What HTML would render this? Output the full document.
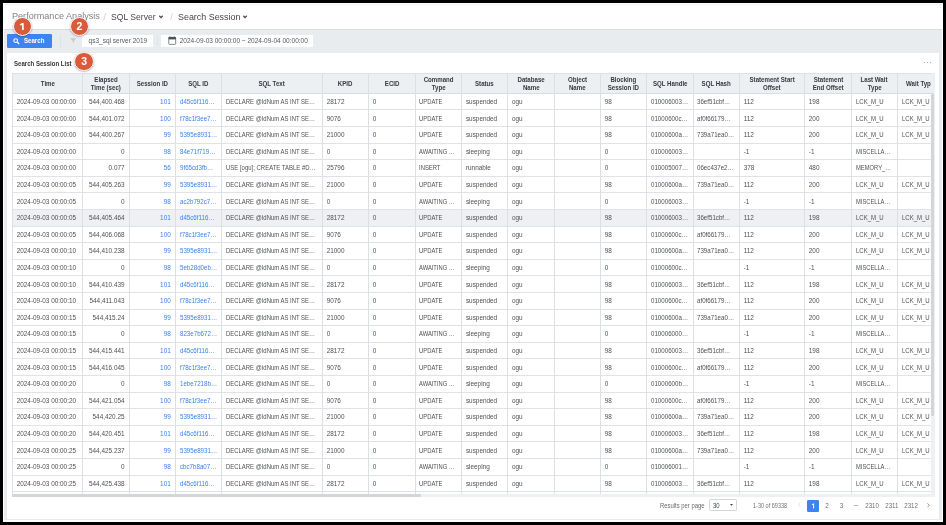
<!DOCTYPE html><html><head><meta charset="utf-8"><style>
*{box-sizing:border-box;margin:0;padding:0}
html,body{width:946px;height:525px;overflow:hidden;background:#000;font-family:"Liberation Sans",sans-serif}
.a{position:absolute}
.t{position:absolute;white-space:nowrap;display:block}
#screen{will-change:transform;position:absolute;left:3px;top:3px;width:940px;height:519px;background:#fff;overflow:hidden}
#clip{position:absolute;left:9.4px;top:70.1px;width:921.6px;height:424px;overflow:hidden}
.badge{position:absolute;width:19.6px;height:19.6px;border-radius:50%;background:#d95b3c;border:1.5px solid #fff;box-shadow:0 0.5px 1.8px rgba(0,0,0,.38);color:#fff;font-weight:bold;font-size:10.5px;line-height:16.6px;text-align:center}
</style></head><body><div id="screen">
<div class="a" style="left:1px;top:26px;width:938px;height:492px;background:#e9ecef"></div>
<div class="a" style="left:1px;top:25.8px;width:938px;height:1.2px;background:#d9dce0"></div>
<div class="a" style="left:1px;top:1px;width:938px;height:1px;background:#f3f3f3"></div>
<span class="t" style="left:9.20px;top:4.14px;font-size:9.4px;line-height:18.8px;color:#808387;transform:scaleX(0.969);transform-origin:0 50%;">Performance Analysis</span>
<span class="t" style="left:100.60px;top:4.74px;font-size:9.4px;line-height:18.8px;color:#cdd0d4;">/</span>
<span class="t" style="left:108.30px;top:4.11px;font-size:9.5px;line-height:19.0px;color:#45484c;transform:scaleX(0.905);transform-origin:0 50%;">SQL Server</span>
<span class="t" style="left:167.20px;top:4.74px;font-size:9.4px;line-height:18.8px;color:#cdd0d4;">/</span>
<span class="t" style="left:175.00px;top:4.11px;font-size:9.5px;line-height:19.0px;color:#45484c;transform:scaleX(0.938);transform-origin:0 50%;">Search Session</span>
<svg class="a" style="left:155.1px;top:12.0px" width="6" height="4" viewBox="0 0 6 4"><path d="M1.3 0.8 L3 2.6 L4.7 0.8" fill="none" stroke="#45484c" stroke-width="1.25"/></svg>
<svg class="a" style="left:239.1px;top:12.0px" width="6" height="4" viewBox="0 0 6 4"><path d="M1.3 0.8 L3 2.6 L4.7 0.8" fill="none" stroke="#45484c" stroke-width="1.25"/></svg>
<div class="a" style="left:4px;top:30.799999999999997px;width:44.9px;height:13.9px;background:#3d84f2;border-radius:1.2px"></div>
<svg class="a" style="left:9.5px;top:34.5px" width="8" height="7" viewBox="0 0 8 7"><circle cx="2.7" cy="2.6" r="1.85" fill="none" stroke="#fff" stroke-width="1.15"/><path d="M4.1 4.0 L6.2 6.1" stroke="#fff" stroke-width="1.3"/></svg>
<span class="t" style="left:20.80px;top:30.81px;font-size:6.9px;line-height:13.8px;color:#fff;font-weight:bold;transform:scaleX(0.886);transform-origin:0 50%;">Search</span>
<div class="a" style="left:57px;top:31px;width:1px;height:12.5px;background:#dfe2e6"></div>
<svg class="a" style="left:67.2px;top:35.1px" width="7" height="5" viewBox="0 0 7 5"><path d="M0.2 0.2 L6.4 0.2 L3.9 3.0 L3.9 4.8 L2.7 4.8 L2.7 3.0 Z" fill="#c6c9cd"/></svg>
<div class="a" style="left:79.3px;top:31.9px;width:71px;height:12px;background:#fff"></div>
<span class="t" style="left:85.60px;top:31.45px;font-size:6.5px;line-height:13.0px;color:#55585c;">qs3_sql server 2019</span>
<div class="a" style="left:153.6px;top:32.5px;width:1px;height:9px;background:#e0e3e7"></div>
<div class="a" style="left:157.6px;top:31.6px;width:152.7px;height:12.4px;background:#fff"></div>
<svg class="a" style="left:165px;top:33px" width="9" height="9" viewBox="0 0 9 9"><rect x="0.75" y="1.25" width="6.9" height="7.1" rx="0.7" fill="none" stroke="#5f6267" stroke-width="0.75"/><rect x="0.6" y="1.1" width="7.2" height="2.3" fill="#4a4d52"/><rect x="1.7" y="0.5" width="0.7" height="1" fill="#4a4d52"/><rect x="5.9" y="0.5" width="0.7" height="1" fill="#4a4d52"/></svg>
<span class="t" style="left:176.70px;top:31.45px;font-size:6.5px;line-height:13.0px;color:#55585c;">2024-09-03 00:00:00 ~ 2024-09-04 00:00:00</span>
<div class="a" style="left:4px;top:49.7px;width:932px;height:465.9px;background:#fff"></div>
<span class="t" style="left:10.70px;top:53.57px;font-size:7.0px;line-height:14.0px;color:#363636;font-weight:bold;transform:scaleX(0.866);transform-origin:0 50%;">Search Session List</span>
<div class="a" style="left:920.6px;top:59.2px;width:1.3px;height:1.3px;background:#8f9296;border-radius:50%"></div>
<div class="a" style="left:923.6px;top:59.2px;width:1.3px;height:1.3px;background:#8f9296;border-radius:50%"></div>
<div class="a" style="left:926.6px;top:59.2px;width:1.3px;height:1.3px;background:#8f9296;border-radius:50%"></div>
<div id="clip" style="left:9.40px;top:70.10px;width:921.60px;height:420.90px">
<div class="a" style="left:0;top:0;width:1000px;height:20.20px;background:#edf0f3"></div>
<div class="a" style="left:0;top:136.40px;width:1000px;height:16.60px;background:#eef0f3"></div>
<div class="a" style="left:0;top:-0.10px;width:1000px;height:1px;background:#dde0e5"></div>
<div class="a" style="left:0;top:19.90px;width:1000px;height:1px;background:#d9dde2"></div>
<div class="a" style="left:0;top:35.90px;width:1000px;height:1px;background:#dfe2e6"></div>
<div class="a" style="left:0;top:52.90px;width:1000px;height:1px;background:#dfe2e6"></div>
<div class="a" style="left:0;top:69.90px;width:1000px;height:1px;background:#dfe2e6"></div>
<div class="a" style="left:0;top:85.90px;width:1000px;height:1px;background:#dfe2e6"></div>
<div class="a" style="left:0;top:102.90px;width:1000px;height:1px;background:#dfe2e6"></div>
<div class="a" style="left:0;top:118.90px;width:1000px;height:1px;background:#dfe2e6"></div>
<div class="a" style="left:0;top:135.90px;width:1000px;height:1px;background:#dfe2e6"></div>
<div class="a" style="left:0;top:152.90px;width:1000px;height:1px;background:#dfe2e6"></div>
<div class="a" style="left:0;top:168.90px;width:1000px;height:1px;background:#dfe2e6"></div>
<div class="a" style="left:0;top:185.90px;width:1000px;height:1px;background:#dfe2e6"></div>
<div class="a" style="left:0;top:201.90px;width:1000px;height:1px;background:#dfe2e6"></div>
<div class="a" style="left:0;top:218.90px;width:1000px;height:1px;background:#dfe2e6"></div>
<div class="a" style="left:0;top:235.90px;width:1000px;height:1px;background:#dfe2e6"></div>
<div class="a" style="left:0;top:251.90px;width:1000px;height:1px;background:#dfe2e6"></div>
<div class="a" style="left:0;top:268.90px;width:1000px;height:1px;background:#dfe2e6"></div>
<div class="a" style="left:0;top:284.90px;width:1000px;height:1px;background:#dfe2e6"></div>
<div class="a" style="left:0;top:301.90px;width:1000px;height:1px;background:#dfe2e6"></div>
<div class="a" style="left:0;top:318.90px;width:1000px;height:1px;background:#dfe2e6"></div>
<div class="a" style="left:0;top:334.90px;width:1000px;height:1px;background:#dfe2e6"></div>
<div class="a" style="left:0;top:351.90px;width:1000px;height:1px;background:#dfe2e6"></div>
<div class="a" style="left:0;top:367.90px;width:1000px;height:1px;background:#dfe2e6"></div>
<div class="a" style="left:0;top:384.90px;width:1000px;height:1px;background:#dfe2e6"></div>
<div class="a" style="left:0;top:401.90px;width:1000px;height:1px;background:#dfe2e6"></div>
<div class="a" style="left:0;top:417.90px;width:1000px;height:1px;background:#dfe2e6"></div>
<div class="a" style="left:0;top:434.90px;width:1000px;height:1px;background:#dfe2e6"></div>
<div class="a" style="left:-0.40px;top:0;width:1px;height:420.90px;background:#dcdfe4"></div>
<div class="a" style="left:69.60px;top:0;width:1px;height:420.90px;background:#dcdfe4"></div>
<div class="a" style="left:116.60px;top:0;width:1px;height:420.90px;background:#dcdfe4"></div>
<div class="a" style="left:162.60px;top:0;width:1px;height:420.90px;background:#dcdfe4"></div>
<div class="a" style="left:208.60px;top:0;width:1px;height:420.90px;background:#dcdfe4"></div>
<div class="a" style="left:309.60px;top:0;width:1px;height:420.90px;background:#dcdfe4"></div>
<div class="a" style="left:355.60px;top:0;width:1px;height:420.90px;background:#dcdfe4"></div>
<div class="a" style="left:402.60px;top:0;width:1px;height:420.90px;background:#dcdfe4"></div>
<div class="a" style="left:448.60px;top:0;width:1px;height:420.90px;background:#dcdfe4"></div>
<div class="a" style="left:494.60px;top:0;width:1px;height:420.90px;background:#dcdfe4"></div>
<div class="a" style="left:541.60px;top:0;width:1px;height:420.90px;background:#dcdfe4"></div>
<div class="a" style="left:587.60px;top:0;width:1px;height:420.90px;background:#dcdfe4"></div>
<div class="a" style="left:633.60px;top:0;width:1px;height:420.90px;background:#dcdfe4"></div>
<div class="a" style="left:680.60px;top:0;width:1px;height:420.90px;background:#dcdfe4"></div>
<div class="a" style="left:726.60px;top:0;width:1px;height:420.90px;background:#dcdfe4"></div>
<div class="a" style="left:791.60px;top:0;width:1px;height:420.90px;background:#dcdfe4"></div>
<div class="a" style="left:838.60px;top:0;width:1px;height:420.90px;background:#dcdfe4"></div>
<div class="a" style="left:884.60px;top:0;width:1px;height:420.90px;background:#dcdfe4"></div>
<span class="t" style="left:27.38px;top:4.14px;font-size:6.8px;line-height:13.6px;color:#36393d;font-weight:bold;transform:scaleX(0.900);transform-origin:50% 50%;">Time</span>
<span class="t" style="left:80.66px;top:0.14px;font-size:6.8px;line-height:13.6px;color:#36393d;font-weight:bold;transform:scaleX(0.900);transform-origin:50% 50%;">Elapsed</span>
<span class="t" style="left:76.94px;top:7.84px;font-size:6.8px;line-height:13.6px;color:#36393d;font-weight:bold;transform:scaleX(0.900);transform-origin:50% 50%;">Time (sec)</span>
<span class="t" style="left:122.62px;top:4.14px;font-size:6.8px;line-height:13.6px;color:#36393d;font-weight:bold;transform:scaleX(0.900);transform-origin:50% 50%;">Session ID</span>
<span class="t" style="left:174.83px;top:4.14px;font-size:6.8px;line-height:13.6px;color:#36393d;font-weight:bold;transform:scaleX(0.900);transform-origin:50% 50%;">SQL ID</span>
<span class="t" style="left:244.94px;top:4.14px;font-size:6.8px;line-height:13.6px;color:#36393d;font-weight:bold;transform:scaleX(0.900);transform-origin:50% 50%;">SQL Text</span>
<span class="t" style="left:324.88px;top:4.14px;font-size:6.8px;line-height:13.6px;color:#36393d;font-weight:bold;transform:scaleX(0.900);transform-origin:50% 50%;">KPID</span>
<span class="t" style="left:371.23px;top:4.14px;font-size:6.8px;line-height:13.6px;color:#36393d;font-weight:bold;transform:scaleX(0.900);transform-origin:50% 50%;">ECID</span>
<span class="t" style="left:409.33px;top:0.14px;font-size:6.8px;line-height:13.6px;color:#36393d;font-weight:bold;transform:scaleX(0.900);transform-origin:50% 50%;">Command</span>
<span class="t" style="left:418.27px;top:7.84px;font-size:6.8px;line-height:13.6px;color:#36393d;font-weight:bold;transform:scaleX(0.900);transform-origin:50% 50%;">Type</span>
<span class="t" style="left:461.81px;top:4.14px;font-size:6.8px;line-height:13.6px;color:#36393d;font-weight:bold;transform:scaleX(0.900);transform-origin:50% 50%;">Status</span>
<span class="t" style="left:503.33px;top:0.14px;font-size:6.8px;line-height:13.6px;color:#36393d;font-weight:bold;transform:scaleX(0.900);transform-origin:50% 50%;">Database</span>
<span class="t" style="left:509.19px;top:7.84px;font-size:6.8px;line-height:13.6px;color:#36393d;font-weight:bold;transform:scaleX(0.900);transform-origin:50% 50%;">Name</span>
<span class="t" style="left:554.27px;top:0.14px;font-size:6.8px;line-height:13.6px;color:#36393d;font-weight:bold;transform:scaleX(0.900);transform-origin:50% 50%;">Object</span>
<span class="t" style="left:555.59px;top:7.84px;font-size:6.8px;line-height:13.6px;color:#36393d;font-weight:bold;transform:scaleX(0.900);transform-origin:50% 50%;">Name</span>
<span class="t" style="left:596.64px;top:0.14px;font-size:6.8px;line-height:13.6px;color:#36393d;font-weight:bold;transform:scaleX(0.900);transform-origin:50% 50%;">Blocking</span>
<span class="t" style="left:593.62px;top:7.84px;font-size:6.8px;line-height:13.6px;color:#36393d;font-weight:bold;transform:scaleX(0.900);transform-origin:50% 50%;">Session ID</span>
<span class="t" style="left:638.19px;top:4.14px;font-size:6.8px;line-height:13.6px;color:#36393d;font-weight:bold;transform:scaleX(0.900);transform-origin:50% 50%;">SQL Handle</span>
<span class="t" style="left:687.71px;top:4.14px;font-size:6.8px;line-height:13.6px;color:#36393d;font-weight:bold;transform:scaleX(0.900);transform-origin:50% 50%;">SQL Hash</span>
<span class="t" style="left:734.42px;top:0.14px;font-size:6.8px;line-height:13.6px;color:#36393d;font-weight:bold;transform:scaleX(0.900);transform-origin:50% 50%;">Statement Start</span>
<span class="t" style="left:749.73px;top:7.84px;font-size:6.8px;line-height:13.6px;color:#36393d;font-weight:bold;transform:scaleX(0.900);transform-origin:50% 50%;">Offset</span>
<span class="t" style="left:799.16px;top:0.14px;font-size:6.8px;line-height:13.6px;color:#36393d;font-weight:bold;transform:scaleX(0.900);transform-origin:50% 50%;">Statement</span>
<span class="t" style="left:798.41px;top:7.84px;font-size:6.8px;line-height:13.6px;color:#36393d;font-weight:bold;transform:scaleX(0.900);transform-origin:50% 50%;">End Offset</span>
<span class="t" style="left:847.01px;top:0.14px;font-size:6.8px;line-height:13.6px;color:#36393d;font-weight:bold;transform:scaleX(0.900);transform-origin:50% 50%;">Last Wait</span>
<span class="t" style="left:854.32px;top:7.84px;font-size:6.8px;line-height:13.6px;color:#36393d;font-weight:bold;transform:scaleX(0.900);transform-origin:50% 50%;">Type</span>
<span class="t" style="left:893.90px;top:4.14px;font-size:6.8px;line-height:13.6px;color:#36393d;font-weight:bold;transform:scaleX(0.900);transform-origin:0 50%;">Wait Type</span>
<span class="t" style="left:4.30px;top:22.88px;font-size:6.4px;line-height:12.8px;color:#4d5054;">2024-09-03 00:00:00</span>
<span class="t" style="left:76.61px;top:22.88px;font-size:6.4px;line-height:12.8px;color:#4d5054;">544,400.468</span>
<span class="t" style="left:147.72px;top:22.88px;font-size:6.4px;line-height:12.8px;color:#3b82ec;">101</span>
<span class="t" style="left:167.40px;top:22.88px;font-size:6.4px;line-height:12.8px;color:#3b82ec;transform:scaleX(0.965);transform-origin:0 50%;">d45c6f116…</span>
<span class="t" style="left:213.40px;top:22.88px;font-size:6.4px;line-height:12.8px;color:#4d5054;transform:scaleX(0.928);transform-origin:0 50%;">DECLARE @IdNum AS INT SE…</span>
<span class="t" style="left:314.30px;top:22.88px;font-size:6.4px;line-height:12.8px;color:#4d5054;">28172</span>
<span class="t" style="left:360.30px;top:22.88px;font-size:6.4px;line-height:12.8px;color:#4d5054;">0</span>
<span class="t" style="left:407.00px;top:22.88px;font-size:6.4px;line-height:12.8px;color:#4d5054;transform:scaleX(0.920);transform-origin:0 50%;">UPDATE</span>
<span class="t" style="left:453.50px;top:22.88px;font-size:6.4px;line-height:12.8px;color:#4d5054;">suspended</span>
<span class="t" style="left:499.50px;top:22.88px;font-size:6.4px;line-height:12.8px;color:#4d5054;">ogu</span>
<span class="t" style="left:592.30px;top:22.88px;font-size:6.4px;line-height:12.8px;color:#4d5054;">98</span>
<span class="t" style="left:638.30px;top:22.88px;font-size:6.4px;line-height:12.8px;color:#4d5054;transform:scaleX(0.967);transform-origin:0 50%;">010006003…</span>
<span class="t" style="left:685.10px;top:22.88px;font-size:6.4px;line-height:12.8px;color:#4d5054;transform:scaleX(0.963);transform-origin:0 50%;">36ef51cbf…</span>
<span class="t" style="left:731.30px;top:22.88px;font-size:6.4px;line-height:12.8px;color:#4d5054;">112</span>
<span class="t" style="left:796.40px;top:22.88px;font-size:6.4px;line-height:12.8px;color:#4d5054;">198</span>
<span class="t" style="left:843.40px;top:22.88px;font-size:6.4px;line-height:12.8px;color:#4d5054;transform:scaleX(0.939);transform-origin:0 50%;">LCK_M_U</span>
<span class="t" style="left:889.20px;top:22.88px;font-size:6.4px;line-height:12.8px;color:#4d5054;transform:scaleX(0.939);transform-origin:0 50%;">LCK_M_U</span>
<span class="t" style="left:4.30px;top:39.48px;font-size:6.4px;line-height:12.8px;color:#4d5054;">2024-09-03 00:00:00</span>
<span class="t" style="left:76.61px;top:39.48px;font-size:6.4px;line-height:12.8px;color:#4d5054;">544,401.072</span>
<span class="t" style="left:147.72px;top:39.48px;font-size:6.4px;line-height:12.8px;color:#3b82ec;">100</span>
<span class="t" style="left:167.40px;top:39.48px;font-size:6.4px;line-height:12.8px;color:#3b82ec;transform:scaleX(0.966);transform-origin:0 50%;">f78c1f3ee7…</span>
<span class="t" style="left:213.40px;top:39.48px;font-size:6.4px;line-height:12.8px;color:#4d5054;transform:scaleX(0.928);transform-origin:0 50%;">DECLARE @IdNum AS INT SE…</span>
<span class="t" style="left:314.30px;top:39.48px;font-size:6.4px;line-height:12.8px;color:#4d5054;">9076</span>
<span class="t" style="left:360.30px;top:39.48px;font-size:6.4px;line-height:12.8px;color:#4d5054;">0</span>
<span class="t" style="left:407.00px;top:39.48px;font-size:6.4px;line-height:12.8px;color:#4d5054;transform:scaleX(0.920);transform-origin:0 50%;">UPDATE</span>
<span class="t" style="left:453.50px;top:39.48px;font-size:6.4px;line-height:12.8px;color:#4d5054;">suspended</span>
<span class="t" style="left:499.50px;top:39.48px;font-size:6.4px;line-height:12.8px;color:#4d5054;">ogu</span>
<span class="t" style="left:592.30px;top:39.48px;font-size:6.4px;line-height:12.8px;color:#4d5054;">98</span>
<span class="t" style="left:638.30px;top:39.48px;font-size:6.4px;line-height:12.8px;color:#4d5054;transform:scaleX(0.966);transform-origin:0 50%;">01000600c…</span>
<span class="t" style="left:685.10px;top:39.48px;font-size:6.4px;line-height:12.8px;color:#4d5054;transform:scaleX(0.963);transform-origin:0 50%;">af0f66179…</span>
<span class="t" style="left:731.30px;top:39.48px;font-size:6.4px;line-height:12.8px;color:#4d5054;">112</span>
<span class="t" style="left:796.40px;top:39.48px;font-size:6.4px;line-height:12.8px;color:#4d5054;">200</span>
<span class="t" style="left:843.40px;top:39.48px;font-size:6.4px;line-height:12.8px;color:#4d5054;transform:scaleX(0.939);transform-origin:0 50%;">LCK_M_U</span>
<span class="t" style="left:889.20px;top:39.48px;font-size:6.4px;line-height:12.8px;color:#4d5054;transform:scaleX(0.939);transform-origin:0 50%;">LCK_M_U</span>
<span class="t" style="left:4.30px;top:56.08px;font-size:6.4px;line-height:12.8px;color:#4d5054;">2024-09-03 00:00:00</span>
<span class="t" style="left:76.61px;top:56.08px;font-size:6.4px;line-height:12.8px;color:#4d5054;">544,400.267</span>
<span class="t" style="left:151.28px;top:56.08px;font-size:6.4px;line-height:12.8px;color:#3b82ec;">99</span>
<span class="t" style="left:167.40px;top:56.08px;font-size:6.4px;line-height:12.8px;color:#3b82ec;transform:scaleX(0.967);transform-origin:0 50%;">5395e8931…</span>
<span class="t" style="left:213.40px;top:56.08px;font-size:6.4px;line-height:12.8px;color:#4d5054;transform:scaleX(0.928);transform-origin:0 50%;">DECLARE @IdNum AS INT SE…</span>
<span class="t" style="left:314.30px;top:56.08px;font-size:6.4px;line-height:12.8px;color:#4d5054;">21000</span>
<span class="t" style="left:360.30px;top:56.08px;font-size:6.4px;line-height:12.8px;color:#4d5054;">0</span>
<span class="t" style="left:407.00px;top:56.08px;font-size:6.4px;line-height:12.8px;color:#4d5054;transform:scaleX(0.920);transform-origin:0 50%;">UPDATE</span>
<span class="t" style="left:453.50px;top:56.08px;font-size:6.4px;line-height:12.8px;color:#4d5054;">suspended</span>
<span class="t" style="left:499.50px;top:56.08px;font-size:6.4px;line-height:12.8px;color:#4d5054;">ogu</span>
<span class="t" style="left:592.30px;top:56.08px;font-size:6.4px;line-height:12.8px;color:#4d5054;">98</span>
<span class="t" style="left:638.30px;top:56.08px;font-size:6.4px;line-height:12.8px;color:#4d5054;transform:scaleX(0.967);transform-origin:0 50%;">01000600a…</span>
<span class="t" style="left:685.10px;top:56.08px;font-size:6.4px;line-height:12.8px;color:#4d5054;transform:scaleX(0.967);transform-origin:0 50%;">739a71ea0…</span>
<span class="t" style="left:731.30px;top:56.08px;font-size:6.4px;line-height:12.8px;color:#4d5054;">112</span>
<span class="t" style="left:796.40px;top:56.08px;font-size:6.4px;line-height:12.8px;color:#4d5054;">200</span>
<span class="t" style="left:843.40px;top:56.08px;font-size:6.4px;line-height:12.8px;color:#4d5054;transform:scaleX(0.939);transform-origin:0 50%;">LCK_M_U</span>
<span class="t" style="left:889.20px;top:56.08px;font-size:6.4px;line-height:12.8px;color:#4d5054;transform:scaleX(0.939);transform-origin:0 50%;">LCK_M_U</span>
<span class="t" style="left:4.30px;top:72.68px;font-size:6.4px;line-height:12.8px;color:#4d5054;">2024-09-03 00:00:00</span>
<span class="t" style="left:108.64px;top:72.68px;font-size:6.4px;line-height:12.8px;color:#4d5054;">0</span>
<span class="t" style="left:151.28px;top:72.68px;font-size:6.4px;line-height:12.8px;color:#3b82ec;">98</span>
<span class="t" style="left:167.40px;top:72.68px;font-size:6.4px;line-height:12.8px;color:#3b82ec;transform:scaleX(0.965);transform-origin:0 50%;">84e71f719…</span>
<span class="t" style="left:213.40px;top:72.68px;font-size:6.4px;line-height:12.8px;color:#4d5054;transform:scaleX(0.928);transform-origin:0 50%;">DECLARE @IdNum AS INT SE…</span>
<span class="t" style="left:314.30px;top:72.68px;font-size:6.4px;line-height:12.8px;color:#4d5054;">0</span>
<span class="t" style="left:360.30px;top:72.68px;font-size:6.4px;line-height:12.8px;color:#4d5054;">0</span>
<span class="t" style="left:407.00px;top:72.68px;font-size:6.4px;line-height:12.8px;color:#4d5054;transform:scaleX(0.904);transform-origin:0 50%;">AWAITING …</span>
<span class="t" style="left:453.50px;top:72.68px;font-size:6.4px;line-height:12.8px;color:#4d5054;">sleeping</span>
<span class="t" style="left:499.50px;top:72.68px;font-size:6.4px;line-height:12.8px;color:#4d5054;">ogu</span>
<span class="t" style="left:592.30px;top:72.68px;font-size:6.4px;line-height:12.8px;color:#4d5054;">0</span>
<span class="t" style="left:638.30px;top:72.68px;font-size:6.4px;line-height:12.8px;color:#4d5054;transform:scaleX(0.967);transform-origin:0 50%;">010006003…</span>
<span class="t" style="left:731.30px;top:72.68px;font-size:6.4px;line-height:12.8px;color:#4d5054;">-1</span>
<span class="t" style="left:796.40px;top:72.68px;font-size:6.4px;line-height:12.8px;color:#4d5054;">-1</span>
<span class="t" style="left:843.40px;top:72.68px;font-size:6.4px;line-height:12.8px;color:#4d5054;transform:scaleX(0.900);transform-origin:0 50%;">MISCELLA…</span>
<span class="t" style="left:4.30px;top:89.28px;font-size:6.4px;line-height:12.8px;color:#4d5054;">2024-09-03 00:00:00</span>
<span class="t" style="left:96.18px;top:89.28px;font-size:6.4px;line-height:12.8px;color:#4d5054;">0.077</span>
<span class="t" style="left:151.28px;top:89.28px;font-size:6.4px;line-height:12.8px;color:#3b82ec;">56</span>
<span class="t" style="left:167.40px;top:89.28px;font-size:6.4px;line-height:12.8px;color:#3b82ec;transform:scaleX(0.963);transform-origin:0 50%;">9f65cd3fb…</span>
<span class="t" style="left:213.40px;top:89.28px;font-size:6.4px;line-height:12.8px;color:#4d5054;transform:scaleX(0.934);transform-origin:0 50%;">USE [ogu]; CREATE TABLE #D…</span>
<span class="t" style="left:314.30px;top:89.28px;font-size:6.4px;line-height:12.8px;color:#4d5054;">25796</span>
<span class="t" style="left:360.30px;top:89.28px;font-size:6.4px;line-height:12.8px;color:#4d5054;">0</span>
<span class="t" style="left:407.00px;top:89.28px;font-size:6.4px;line-height:12.8px;color:#4d5054;transform:scaleX(0.920);transform-origin:0 50%;">INSERT</span>
<span class="t" style="left:453.50px;top:89.28px;font-size:6.4px;line-height:12.8px;color:#4d5054;">runnable</span>
<span class="t" style="left:499.50px;top:89.28px;font-size:6.4px;line-height:12.8px;color:#4d5054;">ogu</span>
<span class="t" style="left:592.30px;top:89.28px;font-size:6.4px;line-height:12.8px;color:#4d5054;">0</span>
<span class="t" style="left:638.30px;top:89.28px;font-size:6.4px;line-height:12.8px;color:#4d5054;transform:scaleX(0.967);transform-origin:0 50%;">010005007…</span>
<span class="t" style="left:685.10px;top:89.28px;font-size:6.4px;line-height:12.8px;color:#4d5054;transform:scaleX(0.966);transform-origin:0 50%;">06ec437e2…</span>
<span class="t" style="left:731.30px;top:89.28px;font-size:6.4px;line-height:12.8px;color:#4d5054;">378</span>
<span class="t" style="left:796.40px;top:89.28px;font-size:6.4px;line-height:12.8px;color:#4d5054;">480</span>
<span class="t" style="left:843.40px;top:89.28px;font-size:6.4px;line-height:12.8px;color:#4d5054;transform:scaleX(0.908);transform-origin:0 50%;">MEMORY_…</span>
<span class="t" style="left:4.30px;top:105.88px;font-size:6.4px;line-height:12.8px;color:#4d5054;">2024-09-03 00:00:05</span>
<span class="t" style="left:76.61px;top:105.88px;font-size:6.4px;line-height:12.8px;color:#4d5054;">544,405.263</span>
<span class="t" style="left:151.28px;top:105.88px;font-size:6.4px;line-height:12.8px;color:#3b82ec;">99</span>
<span class="t" style="left:167.40px;top:105.88px;font-size:6.4px;line-height:12.8px;color:#3b82ec;transform:scaleX(0.967);transform-origin:0 50%;">5395e8931…</span>
<span class="t" style="left:213.40px;top:105.88px;font-size:6.4px;line-height:12.8px;color:#4d5054;transform:scaleX(0.928);transform-origin:0 50%;">DECLARE @IdNum AS INT SE…</span>
<span class="t" style="left:314.30px;top:105.88px;font-size:6.4px;line-height:12.8px;color:#4d5054;">21000</span>
<span class="t" style="left:360.30px;top:105.88px;font-size:6.4px;line-height:12.8px;color:#4d5054;">0</span>
<span class="t" style="left:407.00px;top:105.88px;font-size:6.4px;line-height:12.8px;color:#4d5054;transform:scaleX(0.920);transform-origin:0 50%;">UPDATE</span>
<span class="t" style="left:453.50px;top:105.88px;font-size:6.4px;line-height:12.8px;color:#4d5054;">suspended</span>
<span class="t" style="left:499.50px;top:105.88px;font-size:6.4px;line-height:12.8px;color:#4d5054;">ogu</span>
<span class="t" style="left:592.30px;top:105.88px;font-size:6.4px;line-height:12.8px;color:#4d5054;">98</span>
<span class="t" style="left:638.30px;top:105.88px;font-size:6.4px;line-height:12.8px;color:#4d5054;transform:scaleX(0.967);transform-origin:0 50%;">01000600a…</span>
<span class="t" style="left:685.10px;top:105.88px;font-size:6.4px;line-height:12.8px;color:#4d5054;transform:scaleX(0.967);transform-origin:0 50%;">739a71ea0…</span>
<span class="t" style="left:731.30px;top:105.88px;font-size:6.4px;line-height:12.8px;color:#4d5054;">112</span>
<span class="t" style="left:796.40px;top:105.88px;font-size:6.4px;line-height:12.8px;color:#4d5054;">200</span>
<span class="t" style="left:843.40px;top:105.88px;font-size:6.4px;line-height:12.8px;color:#4d5054;transform:scaleX(0.939);transform-origin:0 50%;">LCK_M_U</span>
<span class="t" style="left:889.20px;top:105.88px;font-size:6.4px;line-height:12.8px;color:#4d5054;transform:scaleX(0.939);transform-origin:0 50%;">LCK_M_U</span>
<span class="t" style="left:4.30px;top:122.48px;font-size:6.4px;line-height:12.8px;color:#4d5054;">2024-09-03 00:00:05</span>
<span class="t" style="left:108.64px;top:122.48px;font-size:6.4px;line-height:12.8px;color:#4d5054;">0</span>
<span class="t" style="left:151.28px;top:122.48px;font-size:6.4px;line-height:12.8px;color:#3b82ec;">98</span>
<span class="t" style="left:167.40px;top:122.48px;font-size:6.4px;line-height:12.8px;color:#3b82ec;transform:scaleX(0.966);transform-origin:0 50%;">ac2b792c7…</span>
<span class="t" style="left:213.40px;top:122.48px;font-size:6.4px;line-height:12.8px;color:#4d5054;transform:scaleX(0.928);transform-origin:0 50%;">DECLARE @IdNum AS INT SE…</span>
<span class="t" style="left:314.30px;top:122.48px;font-size:6.4px;line-height:12.8px;color:#4d5054;">0</span>
<span class="t" style="left:360.30px;top:122.48px;font-size:6.4px;line-height:12.8px;color:#4d5054;">0</span>
<span class="t" style="left:407.00px;top:122.48px;font-size:6.4px;line-height:12.8px;color:#4d5054;transform:scaleX(0.904);transform-origin:0 50%;">AWAITING …</span>
<span class="t" style="left:453.50px;top:122.48px;font-size:6.4px;line-height:12.8px;color:#4d5054;">sleeping</span>
<span class="t" style="left:499.50px;top:122.48px;font-size:6.4px;line-height:12.8px;color:#4d5054;">ogu</span>
<span class="t" style="left:592.30px;top:122.48px;font-size:6.4px;line-height:12.8px;color:#4d5054;">0</span>
<span class="t" style="left:638.30px;top:122.48px;font-size:6.4px;line-height:12.8px;color:#4d5054;transform:scaleX(0.967);transform-origin:0 50%;">010006003…</span>
<span class="t" style="left:731.30px;top:122.48px;font-size:6.4px;line-height:12.8px;color:#4d5054;">-1</span>
<span class="t" style="left:796.40px;top:122.48px;font-size:6.4px;line-height:12.8px;color:#4d5054;">-1</span>
<span class="t" style="left:843.40px;top:122.48px;font-size:6.4px;line-height:12.8px;color:#4d5054;transform:scaleX(0.900);transform-origin:0 50%;">MISCELLA…</span>
<span class="t" style="left:4.30px;top:139.08px;font-size:6.4px;line-height:12.8px;color:#4d5054;">2024-09-03 00:00:05</span>
<span class="t" style="left:76.61px;top:139.08px;font-size:6.4px;line-height:12.8px;color:#4d5054;">544,405.464</span>
<span class="t" style="left:147.72px;top:139.08px;font-size:6.4px;line-height:12.8px;color:#3b82ec;">101</span>
<span class="t" style="left:167.40px;top:139.08px;font-size:6.4px;line-height:12.8px;color:#3b82ec;transform:scaleX(0.965);transform-origin:0 50%;">d45c6f116…</span>
<span class="t" style="left:213.40px;top:139.08px;font-size:6.4px;line-height:12.8px;color:#4d5054;transform:scaleX(0.928);transform-origin:0 50%;">DECLARE @IdNum AS INT SE…</span>
<span class="t" style="left:314.30px;top:139.08px;font-size:6.4px;line-height:12.8px;color:#4d5054;">28172</span>
<span class="t" style="left:360.30px;top:139.08px;font-size:6.4px;line-height:12.8px;color:#4d5054;">0</span>
<span class="t" style="left:407.00px;top:139.08px;font-size:6.4px;line-height:12.8px;color:#4d5054;transform:scaleX(0.920);transform-origin:0 50%;">UPDATE</span>
<span class="t" style="left:453.50px;top:139.08px;font-size:6.4px;line-height:12.8px;color:#4d5054;">suspended</span>
<span class="t" style="left:499.50px;top:139.08px;font-size:6.4px;line-height:12.8px;color:#4d5054;">ogu</span>
<span class="t" style="left:592.30px;top:139.08px;font-size:6.4px;line-height:12.8px;color:#4d5054;">98</span>
<span class="t" style="left:638.30px;top:139.08px;font-size:6.4px;line-height:12.8px;color:#4d5054;transform:scaleX(0.967);transform-origin:0 50%;">010006003…</span>
<span class="t" style="left:685.10px;top:139.08px;font-size:6.4px;line-height:12.8px;color:#4d5054;transform:scaleX(0.963);transform-origin:0 50%;">36ef51cbf…</span>
<span class="t" style="left:731.30px;top:139.08px;font-size:6.4px;line-height:12.8px;color:#4d5054;">112</span>
<span class="t" style="left:796.40px;top:139.08px;font-size:6.4px;line-height:12.8px;color:#4d5054;">198</span>
<span class="t" style="left:843.40px;top:139.08px;font-size:6.4px;line-height:12.8px;color:#4d5054;transform:scaleX(0.939);transform-origin:0 50%;">LCK_M_U</span>
<span class="t" style="left:889.20px;top:139.08px;font-size:6.4px;line-height:12.8px;color:#4d5054;transform:scaleX(0.939);transform-origin:0 50%;">LCK_M_U</span>
<span class="t" style="left:4.30px;top:155.68px;font-size:6.4px;line-height:12.8px;color:#4d5054;">2024-09-03 00:00:05</span>
<span class="t" style="left:76.61px;top:155.68px;font-size:6.4px;line-height:12.8px;color:#4d5054;">544,406.068</span>
<span class="t" style="left:147.72px;top:155.68px;font-size:6.4px;line-height:12.8px;color:#3b82ec;">100</span>
<span class="t" style="left:167.40px;top:155.68px;font-size:6.4px;line-height:12.8px;color:#3b82ec;transform:scaleX(0.966);transform-origin:0 50%;">f78c1f3ee7…</span>
<span class="t" style="left:213.40px;top:155.68px;font-size:6.4px;line-height:12.8px;color:#4d5054;transform:scaleX(0.928);transform-origin:0 50%;">DECLARE @IdNum AS INT SE…</span>
<span class="t" style="left:314.30px;top:155.68px;font-size:6.4px;line-height:12.8px;color:#4d5054;">9076</span>
<span class="t" style="left:360.30px;top:155.68px;font-size:6.4px;line-height:12.8px;color:#4d5054;">0</span>
<span class="t" style="left:407.00px;top:155.68px;font-size:6.4px;line-height:12.8px;color:#4d5054;transform:scaleX(0.920);transform-origin:0 50%;">UPDATE</span>
<span class="t" style="left:453.50px;top:155.68px;font-size:6.4px;line-height:12.8px;color:#4d5054;">suspended</span>
<span class="t" style="left:499.50px;top:155.68px;font-size:6.4px;line-height:12.8px;color:#4d5054;">ogu</span>
<span class="t" style="left:592.30px;top:155.68px;font-size:6.4px;line-height:12.8px;color:#4d5054;">98</span>
<span class="t" style="left:638.30px;top:155.68px;font-size:6.4px;line-height:12.8px;color:#4d5054;transform:scaleX(0.966);transform-origin:0 50%;">01000600c…</span>
<span class="t" style="left:685.10px;top:155.68px;font-size:6.4px;line-height:12.8px;color:#4d5054;transform:scaleX(0.963);transform-origin:0 50%;">af0f66179…</span>
<span class="t" style="left:731.30px;top:155.68px;font-size:6.4px;line-height:12.8px;color:#4d5054;">112</span>
<span class="t" style="left:796.40px;top:155.68px;font-size:6.4px;line-height:12.8px;color:#4d5054;">200</span>
<span class="t" style="left:843.40px;top:155.68px;font-size:6.4px;line-height:12.8px;color:#4d5054;transform:scaleX(0.939);transform-origin:0 50%;">LCK_M_U</span>
<span class="t" style="left:889.20px;top:155.68px;font-size:6.4px;line-height:12.8px;color:#4d5054;transform:scaleX(0.939);transform-origin:0 50%;">LCK_M_U</span>
<span class="t" style="left:4.30px;top:172.28px;font-size:6.4px;line-height:12.8px;color:#4d5054;">2024-09-03 00:00:10</span>
<span class="t" style="left:76.61px;top:172.28px;font-size:6.4px;line-height:12.8px;color:#4d5054;">544,410.238</span>
<span class="t" style="left:151.28px;top:172.28px;font-size:6.4px;line-height:12.8px;color:#3b82ec;">99</span>
<span class="t" style="left:167.40px;top:172.28px;font-size:6.4px;line-height:12.8px;color:#3b82ec;transform:scaleX(0.967);transform-origin:0 50%;">5395e8931…</span>
<span class="t" style="left:213.40px;top:172.28px;font-size:6.4px;line-height:12.8px;color:#4d5054;transform:scaleX(0.928);transform-origin:0 50%;">DECLARE @IdNum AS INT SE…</span>
<span class="t" style="left:314.30px;top:172.28px;font-size:6.4px;line-height:12.8px;color:#4d5054;">21000</span>
<span class="t" style="left:360.30px;top:172.28px;font-size:6.4px;line-height:12.8px;color:#4d5054;">0</span>
<span class="t" style="left:407.00px;top:172.28px;font-size:6.4px;line-height:12.8px;color:#4d5054;transform:scaleX(0.920);transform-origin:0 50%;">UPDATE</span>
<span class="t" style="left:453.50px;top:172.28px;font-size:6.4px;line-height:12.8px;color:#4d5054;">suspended</span>
<span class="t" style="left:499.50px;top:172.28px;font-size:6.4px;line-height:12.8px;color:#4d5054;">ogu</span>
<span class="t" style="left:592.30px;top:172.28px;font-size:6.4px;line-height:12.8px;color:#4d5054;">98</span>
<span class="t" style="left:638.30px;top:172.28px;font-size:6.4px;line-height:12.8px;color:#4d5054;transform:scaleX(0.967);transform-origin:0 50%;">01000600a…</span>
<span class="t" style="left:685.10px;top:172.28px;font-size:6.4px;line-height:12.8px;color:#4d5054;transform:scaleX(0.967);transform-origin:0 50%;">739a71ea0…</span>
<span class="t" style="left:731.30px;top:172.28px;font-size:6.4px;line-height:12.8px;color:#4d5054;">112</span>
<span class="t" style="left:796.40px;top:172.28px;font-size:6.4px;line-height:12.8px;color:#4d5054;">200</span>
<span class="t" style="left:843.40px;top:172.28px;font-size:6.4px;line-height:12.8px;color:#4d5054;transform:scaleX(0.939);transform-origin:0 50%;">LCK_M_U</span>
<span class="t" style="left:889.20px;top:172.28px;font-size:6.4px;line-height:12.8px;color:#4d5054;transform:scaleX(0.939);transform-origin:0 50%;">LCK_M_U</span>
<span class="t" style="left:4.30px;top:188.88px;font-size:6.4px;line-height:12.8px;color:#4d5054;">2024-09-03 00:00:10</span>
<span class="t" style="left:108.64px;top:188.88px;font-size:6.4px;line-height:12.8px;color:#4d5054;">0</span>
<span class="t" style="left:151.28px;top:188.88px;font-size:6.4px;line-height:12.8px;color:#3b82ec;">98</span>
<span class="t" style="left:167.40px;top:188.88px;font-size:6.4px;line-height:12.8px;color:#3b82ec;transform:scaleX(0.967);transform-origin:0 50%;">5eb28d0eb…</span>
<span class="t" style="left:213.40px;top:188.88px;font-size:6.4px;line-height:12.8px;color:#4d5054;transform:scaleX(0.928);transform-origin:0 50%;">DECLARE @IdNum AS INT SE…</span>
<span class="t" style="left:314.30px;top:188.88px;font-size:6.4px;line-height:12.8px;color:#4d5054;">0</span>
<span class="t" style="left:360.30px;top:188.88px;font-size:6.4px;line-height:12.8px;color:#4d5054;">0</span>
<span class="t" style="left:407.00px;top:188.88px;font-size:6.4px;line-height:12.8px;color:#4d5054;transform:scaleX(0.904);transform-origin:0 50%;">AWAITING …</span>
<span class="t" style="left:453.50px;top:188.88px;font-size:6.4px;line-height:12.8px;color:#4d5054;">sleeping</span>
<span class="t" style="left:499.50px;top:188.88px;font-size:6.4px;line-height:12.8px;color:#4d5054;">ogu</span>
<span class="t" style="left:592.30px;top:188.88px;font-size:6.4px;line-height:12.8px;color:#4d5054;">0</span>
<span class="t" style="left:638.30px;top:188.88px;font-size:6.4px;line-height:12.8px;color:#4d5054;transform:scaleX(0.966);transform-origin:0 50%;">01000600c…</span>
<span class="t" style="left:731.30px;top:188.88px;font-size:6.4px;line-height:12.8px;color:#4d5054;">-1</span>
<span class="t" style="left:796.40px;top:188.88px;font-size:6.4px;line-height:12.8px;color:#4d5054;">-1</span>
<span class="t" style="left:843.40px;top:188.88px;font-size:6.4px;line-height:12.8px;color:#4d5054;transform:scaleX(0.900);transform-origin:0 50%;">MISCELLA…</span>
<span class="t" style="left:4.30px;top:205.48px;font-size:6.4px;line-height:12.8px;color:#4d5054;">2024-09-03 00:00:10</span>
<span class="t" style="left:76.61px;top:205.48px;font-size:6.4px;line-height:12.8px;color:#4d5054;">544,410.439</span>
<span class="t" style="left:147.72px;top:205.48px;font-size:6.4px;line-height:12.8px;color:#3b82ec;">101</span>
<span class="t" style="left:167.40px;top:205.48px;font-size:6.4px;line-height:12.8px;color:#3b82ec;transform:scaleX(0.965);transform-origin:0 50%;">d45c6f116…</span>
<span class="t" style="left:213.40px;top:205.48px;font-size:6.4px;line-height:12.8px;color:#4d5054;transform:scaleX(0.928);transform-origin:0 50%;">DECLARE @IdNum AS INT SE…</span>
<span class="t" style="left:314.30px;top:205.48px;font-size:6.4px;line-height:12.8px;color:#4d5054;">28172</span>
<span class="t" style="left:360.30px;top:205.48px;font-size:6.4px;line-height:12.8px;color:#4d5054;">0</span>
<span class="t" style="left:407.00px;top:205.48px;font-size:6.4px;line-height:12.8px;color:#4d5054;transform:scaleX(0.920);transform-origin:0 50%;">UPDATE</span>
<span class="t" style="left:453.50px;top:205.48px;font-size:6.4px;line-height:12.8px;color:#4d5054;">suspended</span>
<span class="t" style="left:499.50px;top:205.48px;font-size:6.4px;line-height:12.8px;color:#4d5054;">ogu</span>
<span class="t" style="left:592.30px;top:205.48px;font-size:6.4px;line-height:12.8px;color:#4d5054;">98</span>
<span class="t" style="left:638.30px;top:205.48px;font-size:6.4px;line-height:12.8px;color:#4d5054;transform:scaleX(0.967);transform-origin:0 50%;">010006003…</span>
<span class="t" style="left:685.10px;top:205.48px;font-size:6.4px;line-height:12.8px;color:#4d5054;transform:scaleX(0.963);transform-origin:0 50%;">36ef51cbf…</span>
<span class="t" style="left:731.30px;top:205.48px;font-size:6.4px;line-height:12.8px;color:#4d5054;">112</span>
<span class="t" style="left:796.40px;top:205.48px;font-size:6.4px;line-height:12.8px;color:#4d5054;">198</span>
<span class="t" style="left:843.40px;top:205.48px;font-size:6.4px;line-height:12.8px;color:#4d5054;transform:scaleX(0.939);transform-origin:0 50%;">LCK_M_U</span>
<span class="t" style="left:889.20px;top:205.48px;font-size:6.4px;line-height:12.8px;color:#4d5054;transform:scaleX(0.939);transform-origin:0 50%;">LCK_M_U</span>
<span class="t" style="left:4.30px;top:222.08px;font-size:6.4px;line-height:12.8px;color:#4d5054;">2024-09-03 00:00:10</span>
<span class="t" style="left:77.08px;top:222.08px;font-size:6.4px;line-height:12.8px;color:#4d5054;">544,411.043</span>
<span class="t" style="left:147.72px;top:222.08px;font-size:6.4px;line-height:12.8px;color:#3b82ec;">100</span>
<span class="t" style="left:167.40px;top:222.08px;font-size:6.4px;line-height:12.8px;color:#3b82ec;transform:scaleX(0.966);transform-origin:0 50%;">f78c1f3ee7…</span>
<span class="t" style="left:213.40px;top:222.08px;font-size:6.4px;line-height:12.8px;color:#4d5054;transform:scaleX(0.928);transform-origin:0 50%;">DECLARE @IdNum AS INT SE…</span>
<span class="t" style="left:314.30px;top:222.08px;font-size:6.4px;line-height:12.8px;color:#4d5054;">9076</span>
<span class="t" style="left:360.30px;top:222.08px;font-size:6.4px;line-height:12.8px;color:#4d5054;">0</span>
<span class="t" style="left:407.00px;top:222.08px;font-size:6.4px;line-height:12.8px;color:#4d5054;transform:scaleX(0.920);transform-origin:0 50%;">UPDATE</span>
<span class="t" style="left:453.50px;top:222.08px;font-size:6.4px;line-height:12.8px;color:#4d5054;">suspended</span>
<span class="t" style="left:499.50px;top:222.08px;font-size:6.4px;line-height:12.8px;color:#4d5054;">ogu</span>
<span class="t" style="left:592.30px;top:222.08px;font-size:6.4px;line-height:12.8px;color:#4d5054;">98</span>
<span class="t" style="left:638.30px;top:222.08px;font-size:6.4px;line-height:12.8px;color:#4d5054;transform:scaleX(0.966);transform-origin:0 50%;">01000600c…</span>
<span class="t" style="left:685.10px;top:222.08px;font-size:6.4px;line-height:12.8px;color:#4d5054;transform:scaleX(0.963);transform-origin:0 50%;">af0f66179…</span>
<span class="t" style="left:731.30px;top:222.08px;font-size:6.4px;line-height:12.8px;color:#4d5054;">112</span>
<span class="t" style="left:796.40px;top:222.08px;font-size:6.4px;line-height:12.8px;color:#4d5054;">200</span>
<span class="t" style="left:843.40px;top:222.08px;font-size:6.4px;line-height:12.8px;color:#4d5054;transform:scaleX(0.939);transform-origin:0 50%;">LCK_M_U</span>
<span class="t" style="left:889.20px;top:222.08px;font-size:6.4px;line-height:12.8px;color:#4d5054;transform:scaleX(0.939);transform-origin:0 50%;">LCK_M_U</span>
<span class="t" style="left:4.30px;top:238.68px;font-size:6.4px;line-height:12.8px;color:#4d5054;">2024-09-03 00:00:15</span>
<span class="t" style="left:80.17px;top:238.68px;font-size:6.4px;line-height:12.8px;color:#4d5054;">544,415.24</span>
<span class="t" style="left:151.28px;top:238.68px;font-size:6.4px;line-height:12.8px;color:#3b82ec;">99</span>
<span class="t" style="left:167.40px;top:238.68px;font-size:6.4px;line-height:12.8px;color:#3b82ec;transform:scaleX(0.967);transform-origin:0 50%;">5395e8931…</span>
<span class="t" style="left:213.40px;top:238.68px;font-size:6.4px;line-height:12.8px;color:#4d5054;transform:scaleX(0.928);transform-origin:0 50%;">DECLARE @IdNum AS INT SE…</span>
<span class="t" style="left:314.30px;top:238.68px;font-size:6.4px;line-height:12.8px;color:#4d5054;">21000</span>
<span class="t" style="left:360.30px;top:238.68px;font-size:6.4px;line-height:12.8px;color:#4d5054;">0</span>
<span class="t" style="left:407.00px;top:238.68px;font-size:6.4px;line-height:12.8px;color:#4d5054;transform:scaleX(0.920);transform-origin:0 50%;">UPDATE</span>
<span class="t" style="left:453.50px;top:238.68px;font-size:6.4px;line-height:12.8px;color:#4d5054;">suspended</span>
<span class="t" style="left:499.50px;top:238.68px;font-size:6.4px;line-height:12.8px;color:#4d5054;">ogu</span>
<span class="t" style="left:592.30px;top:238.68px;font-size:6.4px;line-height:12.8px;color:#4d5054;">98</span>
<span class="t" style="left:638.30px;top:238.68px;font-size:6.4px;line-height:12.8px;color:#4d5054;transform:scaleX(0.967);transform-origin:0 50%;">01000600a…</span>
<span class="t" style="left:685.10px;top:238.68px;font-size:6.4px;line-height:12.8px;color:#4d5054;transform:scaleX(0.967);transform-origin:0 50%;">739a71ea0…</span>
<span class="t" style="left:731.30px;top:238.68px;font-size:6.4px;line-height:12.8px;color:#4d5054;">112</span>
<span class="t" style="left:796.40px;top:238.68px;font-size:6.4px;line-height:12.8px;color:#4d5054;">200</span>
<span class="t" style="left:843.40px;top:238.68px;font-size:6.4px;line-height:12.8px;color:#4d5054;transform:scaleX(0.939);transform-origin:0 50%;">LCK_M_U</span>
<span class="t" style="left:889.20px;top:238.68px;font-size:6.4px;line-height:12.8px;color:#4d5054;transform:scaleX(0.939);transform-origin:0 50%;">LCK_M_U</span>
<span class="t" style="left:4.30px;top:255.28px;font-size:6.4px;line-height:12.8px;color:#4d5054;">2024-09-03 00:00:15</span>
<span class="t" style="left:108.64px;top:255.28px;font-size:6.4px;line-height:12.8px;color:#4d5054;">0</span>
<span class="t" style="left:151.28px;top:255.28px;font-size:6.4px;line-height:12.8px;color:#3b82ec;">98</span>
<span class="t" style="left:167.40px;top:255.28px;font-size:6.4px;line-height:12.8px;color:#3b82ec;transform:scaleX(0.967);transform-origin:0 50%;">823e7b672…</span>
<span class="t" style="left:213.40px;top:255.28px;font-size:6.4px;line-height:12.8px;color:#4d5054;transform:scaleX(0.928);transform-origin:0 50%;">DECLARE @IdNum AS INT SE…</span>
<span class="t" style="left:314.30px;top:255.28px;font-size:6.4px;line-height:12.8px;color:#4d5054;">0</span>
<span class="t" style="left:360.30px;top:255.28px;font-size:6.4px;line-height:12.8px;color:#4d5054;">0</span>
<span class="t" style="left:407.00px;top:255.28px;font-size:6.4px;line-height:12.8px;color:#4d5054;transform:scaleX(0.904);transform-origin:0 50%;">AWAITING …</span>
<span class="t" style="left:453.50px;top:255.28px;font-size:6.4px;line-height:12.8px;color:#4d5054;">sleeping</span>
<span class="t" style="left:499.50px;top:255.28px;font-size:6.4px;line-height:12.8px;color:#4d5054;">ogu</span>
<span class="t" style="left:592.30px;top:255.28px;font-size:6.4px;line-height:12.8px;color:#4d5054;">0</span>
<span class="t" style="left:638.30px;top:255.28px;font-size:6.4px;line-height:12.8px;color:#4d5054;transform:scaleX(0.967);transform-origin:0 50%;">010006000…</span>
<span class="t" style="left:731.30px;top:255.28px;font-size:6.4px;line-height:12.8px;color:#4d5054;">-1</span>
<span class="t" style="left:796.40px;top:255.28px;font-size:6.4px;line-height:12.8px;color:#4d5054;">-1</span>
<span class="t" style="left:843.40px;top:255.28px;font-size:6.4px;line-height:12.8px;color:#4d5054;transform:scaleX(0.900);transform-origin:0 50%;">MISCELLA…</span>
<span class="t" style="left:4.30px;top:271.88px;font-size:6.4px;line-height:12.8px;color:#4d5054;">2024-09-03 00:00:15</span>
<span class="t" style="left:76.61px;top:271.88px;font-size:6.4px;line-height:12.8px;color:#4d5054;">544,415.441</span>
<span class="t" style="left:147.72px;top:271.88px;font-size:6.4px;line-height:12.8px;color:#3b82ec;">101</span>
<span class="t" style="left:167.40px;top:271.88px;font-size:6.4px;line-height:12.8px;color:#3b82ec;transform:scaleX(0.965);transform-origin:0 50%;">d45c6f116…</span>
<span class="t" style="left:213.40px;top:271.88px;font-size:6.4px;line-height:12.8px;color:#4d5054;transform:scaleX(0.928);transform-origin:0 50%;">DECLARE @IdNum AS INT SE…</span>
<span class="t" style="left:314.30px;top:271.88px;font-size:6.4px;line-height:12.8px;color:#4d5054;">28172</span>
<span class="t" style="left:360.30px;top:271.88px;font-size:6.4px;line-height:12.8px;color:#4d5054;">0</span>
<span class="t" style="left:407.00px;top:271.88px;font-size:6.4px;line-height:12.8px;color:#4d5054;transform:scaleX(0.920);transform-origin:0 50%;">UPDATE</span>
<span class="t" style="left:453.50px;top:271.88px;font-size:6.4px;line-height:12.8px;color:#4d5054;">suspended</span>
<span class="t" style="left:499.50px;top:271.88px;font-size:6.4px;line-height:12.8px;color:#4d5054;">ogu</span>
<span class="t" style="left:592.30px;top:271.88px;font-size:6.4px;line-height:12.8px;color:#4d5054;">98</span>
<span class="t" style="left:638.30px;top:271.88px;font-size:6.4px;line-height:12.8px;color:#4d5054;transform:scaleX(0.967);transform-origin:0 50%;">010006003…</span>
<span class="t" style="left:685.10px;top:271.88px;font-size:6.4px;line-height:12.8px;color:#4d5054;transform:scaleX(0.963);transform-origin:0 50%;">36ef51cbf…</span>
<span class="t" style="left:731.30px;top:271.88px;font-size:6.4px;line-height:12.8px;color:#4d5054;">112</span>
<span class="t" style="left:796.40px;top:271.88px;font-size:6.4px;line-height:12.8px;color:#4d5054;">198</span>
<span class="t" style="left:843.40px;top:271.88px;font-size:6.4px;line-height:12.8px;color:#4d5054;transform:scaleX(0.939);transform-origin:0 50%;">LCK_M_U</span>
<span class="t" style="left:889.20px;top:271.88px;font-size:6.4px;line-height:12.8px;color:#4d5054;transform:scaleX(0.939);transform-origin:0 50%;">LCK_M_U</span>
<span class="t" style="left:4.30px;top:288.48px;font-size:6.4px;line-height:12.8px;color:#4d5054;">2024-09-03 00:00:15</span>
<span class="t" style="left:76.61px;top:288.48px;font-size:6.4px;line-height:12.8px;color:#4d5054;">544,416.045</span>
<span class="t" style="left:147.72px;top:288.48px;font-size:6.4px;line-height:12.8px;color:#3b82ec;">100</span>
<span class="t" style="left:167.40px;top:288.48px;font-size:6.4px;line-height:12.8px;color:#3b82ec;transform:scaleX(0.966);transform-origin:0 50%;">f78c1f3ee7…</span>
<span class="t" style="left:213.40px;top:288.48px;font-size:6.4px;line-height:12.8px;color:#4d5054;transform:scaleX(0.928);transform-origin:0 50%;">DECLARE @IdNum AS INT SE…</span>
<span class="t" style="left:314.30px;top:288.48px;font-size:6.4px;line-height:12.8px;color:#4d5054;">9076</span>
<span class="t" style="left:360.30px;top:288.48px;font-size:6.4px;line-height:12.8px;color:#4d5054;">0</span>
<span class="t" style="left:407.00px;top:288.48px;font-size:6.4px;line-height:12.8px;color:#4d5054;transform:scaleX(0.920);transform-origin:0 50%;">UPDATE</span>
<span class="t" style="left:453.50px;top:288.48px;font-size:6.4px;line-height:12.8px;color:#4d5054;">suspended</span>
<span class="t" style="left:499.50px;top:288.48px;font-size:6.4px;line-height:12.8px;color:#4d5054;">ogu</span>
<span class="t" style="left:592.30px;top:288.48px;font-size:6.4px;line-height:12.8px;color:#4d5054;">98</span>
<span class="t" style="left:638.30px;top:288.48px;font-size:6.4px;line-height:12.8px;color:#4d5054;transform:scaleX(0.966);transform-origin:0 50%;">01000600c…</span>
<span class="t" style="left:685.10px;top:288.48px;font-size:6.4px;line-height:12.8px;color:#4d5054;transform:scaleX(0.963);transform-origin:0 50%;">af0f66179…</span>
<span class="t" style="left:731.30px;top:288.48px;font-size:6.4px;line-height:12.8px;color:#4d5054;">112</span>
<span class="t" style="left:796.40px;top:288.48px;font-size:6.4px;line-height:12.8px;color:#4d5054;">200</span>
<span class="t" style="left:843.40px;top:288.48px;font-size:6.4px;line-height:12.8px;color:#4d5054;transform:scaleX(0.939);transform-origin:0 50%;">LCK_M_U</span>
<span class="t" style="left:889.20px;top:288.48px;font-size:6.4px;line-height:12.8px;color:#4d5054;transform:scaleX(0.939);transform-origin:0 50%;">LCK_M_U</span>
<span class="t" style="left:4.30px;top:305.08px;font-size:6.4px;line-height:12.8px;color:#4d5054;">2024-09-03 00:00:20</span>
<span class="t" style="left:108.64px;top:305.08px;font-size:6.4px;line-height:12.8px;color:#4d5054;">0</span>
<span class="t" style="left:151.28px;top:305.08px;font-size:6.4px;line-height:12.8px;color:#3b82ec;">98</span>
<span class="t" style="left:167.40px;top:305.08px;font-size:6.4px;line-height:12.8px;color:#3b82ec;transform:scaleX(0.967);transform-origin:0 50%;">1ebe7218b…</span>
<span class="t" style="left:213.40px;top:305.08px;font-size:6.4px;line-height:12.8px;color:#4d5054;transform:scaleX(0.928);transform-origin:0 50%;">DECLARE @IdNum AS INT SE…</span>
<span class="t" style="left:314.30px;top:305.08px;font-size:6.4px;line-height:12.8px;color:#4d5054;">0</span>
<span class="t" style="left:360.30px;top:305.08px;font-size:6.4px;line-height:12.8px;color:#4d5054;">0</span>
<span class="t" style="left:407.00px;top:305.08px;font-size:6.4px;line-height:12.8px;color:#4d5054;transform:scaleX(0.904);transform-origin:0 50%;">AWAITING …</span>
<span class="t" style="left:453.50px;top:305.08px;font-size:6.4px;line-height:12.8px;color:#4d5054;">sleeping</span>
<span class="t" style="left:499.50px;top:305.08px;font-size:6.4px;line-height:12.8px;color:#4d5054;">ogu</span>
<span class="t" style="left:592.30px;top:305.08px;font-size:6.4px;line-height:12.8px;color:#4d5054;">0</span>
<span class="t" style="left:638.30px;top:305.08px;font-size:6.4px;line-height:12.8px;color:#4d5054;transform:scaleX(0.967);transform-origin:0 50%;">01000600b…</span>
<span class="t" style="left:731.30px;top:305.08px;font-size:6.4px;line-height:12.8px;color:#4d5054;">-1</span>
<span class="t" style="left:796.40px;top:305.08px;font-size:6.4px;line-height:12.8px;color:#4d5054;">-1</span>
<span class="t" style="left:843.40px;top:305.08px;font-size:6.4px;line-height:12.8px;color:#4d5054;transform:scaleX(0.900);transform-origin:0 50%;">MISCELLA…</span>
<span class="t" style="left:4.30px;top:321.68px;font-size:6.4px;line-height:12.8px;color:#4d5054;">2024-09-03 00:00:20</span>
<span class="t" style="left:76.61px;top:321.68px;font-size:6.4px;line-height:12.8px;color:#4d5054;">544,421.054</span>
<span class="t" style="left:147.72px;top:321.68px;font-size:6.4px;line-height:12.8px;color:#3b82ec;">100</span>
<span class="t" style="left:167.40px;top:321.68px;font-size:6.4px;line-height:12.8px;color:#3b82ec;transform:scaleX(0.966);transform-origin:0 50%;">f78c1f3ee7…</span>
<span class="t" style="left:213.40px;top:321.68px;font-size:6.4px;line-height:12.8px;color:#4d5054;transform:scaleX(0.928);transform-origin:0 50%;">DECLARE @IdNum AS INT SE…</span>
<span class="t" style="left:314.30px;top:321.68px;font-size:6.4px;line-height:12.8px;color:#4d5054;">9076</span>
<span class="t" style="left:360.30px;top:321.68px;font-size:6.4px;line-height:12.8px;color:#4d5054;">0</span>
<span class="t" style="left:407.00px;top:321.68px;font-size:6.4px;line-height:12.8px;color:#4d5054;transform:scaleX(0.920);transform-origin:0 50%;">UPDATE</span>
<span class="t" style="left:453.50px;top:321.68px;font-size:6.4px;line-height:12.8px;color:#4d5054;">suspended</span>
<span class="t" style="left:499.50px;top:321.68px;font-size:6.4px;line-height:12.8px;color:#4d5054;">ogu</span>
<span class="t" style="left:592.30px;top:321.68px;font-size:6.4px;line-height:12.8px;color:#4d5054;">98</span>
<span class="t" style="left:638.30px;top:321.68px;font-size:6.4px;line-height:12.8px;color:#4d5054;transform:scaleX(0.966);transform-origin:0 50%;">01000600c…</span>
<span class="t" style="left:685.10px;top:321.68px;font-size:6.4px;line-height:12.8px;color:#4d5054;transform:scaleX(0.963);transform-origin:0 50%;">af0f66179…</span>
<span class="t" style="left:731.30px;top:321.68px;font-size:6.4px;line-height:12.8px;color:#4d5054;">112</span>
<span class="t" style="left:796.40px;top:321.68px;font-size:6.4px;line-height:12.8px;color:#4d5054;">200</span>
<span class="t" style="left:843.40px;top:321.68px;font-size:6.4px;line-height:12.8px;color:#4d5054;transform:scaleX(0.939);transform-origin:0 50%;">LCK_M_U</span>
<span class="t" style="left:889.20px;top:321.68px;font-size:6.4px;line-height:12.8px;color:#4d5054;transform:scaleX(0.939);transform-origin:0 50%;">LCK_M_U</span>
<span class="t" style="left:4.30px;top:338.28px;font-size:6.4px;line-height:12.8px;color:#4d5054;">2024-09-03 00:00:20</span>
<span class="t" style="left:80.17px;top:338.28px;font-size:6.4px;line-height:12.8px;color:#4d5054;">544,420.25</span>
<span class="t" style="left:151.28px;top:338.28px;font-size:6.4px;line-height:12.8px;color:#3b82ec;">99</span>
<span class="t" style="left:167.40px;top:338.28px;font-size:6.4px;line-height:12.8px;color:#3b82ec;transform:scaleX(0.967);transform-origin:0 50%;">5395e8931…</span>
<span class="t" style="left:213.40px;top:338.28px;font-size:6.4px;line-height:12.8px;color:#4d5054;transform:scaleX(0.928);transform-origin:0 50%;">DECLARE @IdNum AS INT SE…</span>
<span class="t" style="left:314.30px;top:338.28px;font-size:6.4px;line-height:12.8px;color:#4d5054;">21000</span>
<span class="t" style="left:360.30px;top:338.28px;font-size:6.4px;line-height:12.8px;color:#4d5054;">0</span>
<span class="t" style="left:407.00px;top:338.28px;font-size:6.4px;line-height:12.8px;color:#4d5054;transform:scaleX(0.920);transform-origin:0 50%;">UPDATE</span>
<span class="t" style="left:453.50px;top:338.28px;font-size:6.4px;line-height:12.8px;color:#4d5054;">suspended</span>
<span class="t" style="left:499.50px;top:338.28px;font-size:6.4px;line-height:12.8px;color:#4d5054;">ogu</span>
<span class="t" style="left:592.30px;top:338.28px;font-size:6.4px;line-height:12.8px;color:#4d5054;">98</span>
<span class="t" style="left:638.30px;top:338.28px;font-size:6.4px;line-height:12.8px;color:#4d5054;transform:scaleX(0.967);transform-origin:0 50%;">01000600a…</span>
<span class="t" style="left:685.10px;top:338.28px;font-size:6.4px;line-height:12.8px;color:#4d5054;transform:scaleX(0.967);transform-origin:0 50%;">739a71ea0…</span>
<span class="t" style="left:731.30px;top:338.28px;font-size:6.4px;line-height:12.8px;color:#4d5054;">112</span>
<span class="t" style="left:796.40px;top:338.28px;font-size:6.4px;line-height:12.8px;color:#4d5054;">200</span>
<span class="t" style="left:843.40px;top:338.28px;font-size:6.4px;line-height:12.8px;color:#4d5054;transform:scaleX(0.939);transform-origin:0 50%;">LCK_M_U</span>
<span class="t" style="left:889.20px;top:338.28px;font-size:6.4px;line-height:12.8px;color:#4d5054;transform:scaleX(0.939);transform-origin:0 50%;">LCK_M_U</span>
<span class="t" style="left:4.30px;top:354.88px;font-size:6.4px;line-height:12.8px;color:#4d5054;">2024-09-03 00:00:20</span>
<span class="t" style="left:76.61px;top:354.88px;font-size:6.4px;line-height:12.8px;color:#4d5054;">544,420.451</span>
<span class="t" style="left:147.72px;top:354.88px;font-size:6.4px;line-height:12.8px;color:#3b82ec;">101</span>
<span class="t" style="left:167.40px;top:354.88px;font-size:6.4px;line-height:12.8px;color:#3b82ec;transform:scaleX(0.965);transform-origin:0 50%;">d45c6f116…</span>
<span class="t" style="left:213.40px;top:354.88px;font-size:6.4px;line-height:12.8px;color:#4d5054;transform:scaleX(0.928);transform-origin:0 50%;">DECLARE @IdNum AS INT SE…</span>
<span class="t" style="left:314.30px;top:354.88px;font-size:6.4px;line-height:12.8px;color:#4d5054;">28172</span>
<span class="t" style="left:360.30px;top:354.88px;font-size:6.4px;line-height:12.8px;color:#4d5054;">0</span>
<span class="t" style="left:407.00px;top:354.88px;font-size:6.4px;line-height:12.8px;color:#4d5054;transform:scaleX(0.920);transform-origin:0 50%;">UPDATE</span>
<span class="t" style="left:453.50px;top:354.88px;font-size:6.4px;line-height:12.8px;color:#4d5054;">suspended</span>
<span class="t" style="left:499.50px;top:354.88px;font-size:6.4px;line-height:12.8px;color:#4d5054;">ogu</span>
<span class="t" style="left:592.30px;top:354.88px;font-size:6.4px;line-height:12.8px;color:#4d5054;">98</span>
<span class="t" style="left:638.30px;top:354.88px;font-size:6.4px;line-height:12.8px;color:#4d5054;transform:scaleX(0.967);transform-origin:0 50%;">010006003…</span>
<span class="t" style="left:685.10px;top:354.88px;font-size:6.4px;line-height:12.8px;color:#4d5054;transform:scaleX(0.963);transform-origin:0 50%;">36ef51cbf…</span>
<span class="t" style="left:731.30px;top:354.88px;font-size:6.4px;line-height:12.8px;color:#4d5054;">112</span>
<span class="t" style="left:796.40px;top:354.88px;font-size:6.4px;line-height:12.8px;color:#4d5054;">198</span>
<span class="t" style="left:843.40px;top:354.88px;font-size:6.4px;line-height:12.8px;color:#4d5054;transform:scaleX(0.939);transform-origin:0 50%;">LCK_M_U</span>
<span class="t" style="left:889.20px;top:354.88px;font-size:6.4px;line-height:12.8px;color:#4d5054;transform:scaleX(0.939);transform-origin:0 50%;">LCK_M_U</span>
<span class="t" style="left:4.30px;top:371.48px;font-size:6.4px;line-height:12.8px;color:#4d5054;">2024-09-03 00:00:25</span>
<span class="t" style="left:76.61px;top:371.48px;font-size:6.4px;line-height:12.8px;color:#4d5054;">544,425.237</span>
<span class="t" style="left:151.28px;top:371.48px;font-size:6.4px;line-height:12.8px;color:#3b82ec;">99</span>
<span class="t" style="left:167.40px;top:371.48px;font-size:6.4px;line-height:12.8px;color:#3b82ec;transform:scaleX(0.967);transform-origin:0 50%;">5395e8931…</span>
<span class="t" style="left:213.40px;top:371.48px;font-size:6.4px;line-height:12.8px;color:#4d5054;transform:scaleX(0.928);transform-origin:0 50%;">DECLARE @IdNum AS INT SE…</span>
<span class="t" style="left:314.30px;top:371.48px;font-size:6.4px;line-height:12.8px;color:#4d5054;">21000</span>
<span class="t" style="left:360.30px;top:371.48px;font-size:6.4px;line-height:12.8px;color:#4d5054;">0</span>
<span class="t" style="left:407.00px;top:371.48px;font-size:6.4px;line-height:12.8px;color:#4d5054;transform:scaleX(0.920);transform-origin:0 50%;">UPDATE</span>
<span class="t" style="left:453.50px;top:371.48px;font-size:6.4px;line-height:12.8px;color:#4d5054;">suspended</span>
<span class="t" style="left:499.50px;top:371.48px;font-size:6.4px;line-height:12.8px;color:#4d5054;">ogu</span>
<span class="t" style="left:592.30px;top:371.48px;font-size:6.4px;line-height:12.8px;color:#4d5054;">98</span>
<span class="t" style="left:638.30px;top:371.48px;font-size:6.4px;line-height:12.8px;color:#4d5054;transform:scaleX(0.967);transform-origin:0 50%;">01000600a…</span>
<span class="t" style="left:685.10px;top:371.48px;font-size:6.4px;line-height:12.8px;color:#4d5054;transform:scaleX(0.967);transform-origin:0 50%;">739a71ea0…</span>
<span class="t" style="left:731.30px;top:371.48px;font-size:6.4px;line-height:12.8px;color:#4d5054;">112</span>
<span class="t" style="left:796.40px;top:371.48px;font-size:6.4px;line-height:12.8px;color:#4d5054;">200</span>
<span class="t" style="left:843.40px;top:371.48px;font-size:6.4px;line-height:12.8px;color:#4d5054;transform:scaleX(0.939);transform-origin:0 50%;">LCK_M_U</span>
<span class="t" style="left:889.20px;top:371.48px;font-size:6.4px;line-height:12.8px;color:#4d5054;transform:scaleX(0.939);transform-origin:0 50%;">LCK_M_U</span>
<span class="t" style="left:4.30px;top:388.08px;font-size:6.4px;line-height:12.8px;color:#4d5054;">2024-09-03 00:00:25</span>
<span class="t" style="left:108.64px;top:388.08px;font-size:6.4px;line-height:12.8px;color:#4d5054;">0</span>
<span class="t" style="left:151.28px;top:388.08px;font-size:6.4px;line-height:12.8px;color:#3b82ec;">98</span>
<span class="t" style="left:167.40px;top:388.08px;font-size:6.4px;line-height:12.8px;color:#3b82ec;transform:scaleX(0.966);transform-origin:0 50%;">cbc7b8a07…</span>
<span class="t" style="left:213.40px;top:388.08px;font-size:6.4px;line-height:12.8px;color:#4d5054;transform:scaleX(0.928);transform-origin:0 50%;">DECLARE @IdNum AS INT SE…</span>
<span class="t" style="left:314.30px;top:388.08px;font-size:6.4px;line-height:12.8px;color:#4d5054;">0</span>
<span class="t" style="left:360.30px;top:388.08px;font-size:6.4px;line-height:12.8px;color:#4d5054;">0</span>
<span class="t" style="left:407.00px;top:388.08px;font-size:6.4px;line-height:12.8px;color:#4d5054;transform:scaleX(0.904);transform-origin:0 50%;">AWAITING …</span>
<span class="t" style="left:453.50px;top:388.08px;font-size:6.4px;line-height:12.8px;color:#4d5054;">sleeping</span>
<span class="t" style="left:499.50px;top:388.08px;font-size:6.4px;line-height:12.8px;color:#4d5054;">ogu</span>
<span class="t" style="left:592.30px;top:388.08px;font-size:6.4px;line-height:12.8px;color:#4d5054;">0</span>
<span class="t" style="left:638.30px;top:388.08px;font-size:6.4px;line-height:12.8px;color:#4d5054;transform:scaleX(0.967);transform-origin:0 50%;">010006001…</span>
<span class="t" style="left:731.30px;top:388.08px;font-size:6.4px;line-height:12.8px;color:#4d5054;">-1</span>
<span class="t" style="left:796.40px;top:388.08px;font-size:6.4px;line-height:12.8px;color:#4d5054;">-1</span>
<span class="t" style="left:843.40px;top:388.08px;font-size:6.4px;line-height:12.8px;color:#4d5054;transform:scaleX(0.900);transform-origin:0 50%;">MISCELLA…</span>
<span class="t" style="left:4.30px;top:404.68px;font-size:6.4px;line-height:12.8px;color:#4d5054;">2024-09-03 00:00:25</span>
<span class="t" style="left:76.61px;top:404.68px;font-size:6.4px;line-height:12.8px;color:#4d5054;">544,425.438</span>
<span class="t" style="left:147.72px;top:404.68px;font-size:6.4px;line-height:12.8px;color:#3b82ec;">101</span>
<span class="t" style="left:167.40px;top:404.68px;font-size:6.4px;line-height:12.8px;color:#3b82ec;transform:scaleX(0.965);transform-origin:0 50%;">d45c6f116…</span>
<span class="t" style="left:213.40px;top:404.68px;font-size:6.4px;line-height:12.8px;color:#4d5054;transform:scaleX(0.928);transform-origin:0 50%;">DECLARE @IdNum AS INT SE…</span>
<span class="t" style="left:314.30px;top:404.68px;font-size:6.4px;line-height:12.8px;color:#4d5054;">28172</span>
<span class="t" style="left:360.30px;top:404.68px;font-size:6.4px;line-height:12.8px;color:#4d5054;">0</span>
<span class="t" style="left:407.00px;top:404.68px;font-size:6.4px;line-height:12.8px;color:#4d5054;transform:scaleX(0.920);transform-origin:0 50%;">UPDATE</span>
<span class="t" style="left:453.50px;top:404.68px;font-size:6.4px;line-height:12.8px;color:#4d5054;">suspended</span>
<span class="t" style="left:499.50px;top:404.68px;font-size:6.4px;line-height:12.8px;color:#4d5054;">ogu</span>
<span class="t" style="left:592.30px;top:404.68px;font-size:6.4px;line-height:12.8px;color:#4d5054;">98</span>
<span class="t" style="left:638.30px;top:404.68px;font-size:6.4px;line-height:12.8px;color:#4d5054;transform:scaleX(0.967);transform-origin:0 50%;">010006003…</span>
<span class="t" style="left:685.10px;top:404.68px;font-size:6.4px;line-height:12.8px;color:#4d5054;transform:scaleX(0.963);transform-origin:0 50%;">36ef51cbf…</span>
<span class="t" style="left:731.30px;top:404.68px;font-size:6.4px;line-height:12.8px;color:#4d5054;">112</span>
<span class="t" style="left:796.40px;top:404.68px;font-size:6.4px;line-height:12.8px;color:#4d5054;">198</span>
<span class="t" style="left:843.40px;top:404.68px;font-size:6.4px;line-height:12.8px;color:#4d5054;transform:scaleX(0.939);transform-origin:0 50%;">LCK_M_U</span>
<span class="t" style="left:889.20px;top:404.68px;font-size:6.4px;line-height:12.8px;color:#4d5054;transform:scaleX(0.939);transform-origin:0 50%;">LCK_M_U</span>
</div>
<div class="a" style="left:928.0px;top:90.5px;width:3.8px;height:400.5px;background:#eef0f2"></div>
<div class="a" style="left:928.2px;top:90.5px;width:2.5px;height:322.0px;background:#d2d6db;border-radius:1.2px"></div>
<div class="a" style="left:928.0px;top:70.1px;width:3.8px;height:20.4px;background:#edf0f3"></div>
<div class="a" style="left:9.4px;top:491.0px;width:922.4px;height:2.8px;background:#eef0f2"></div>
<div class="a" style="left:9.4px;top:491.0px;width:409.1px;height:2.7px;background:#d2d6db;border-radius:1.2px"></div>
<span class="t" style="left:657.10px;top:496.58px;font-size:6.4px;line-height:12.8px;color:#67696d;transform:scaleX(0.922);transform-origin:0 50%;">Results per page</span>
<div class="a" style="left:705.8px;top:496.3px;width:27.9px;height:11.9px;border:0.9px solid #d3d6da;border-radius:1.2px;background:#fff"></div>
<span class="t" style="left:709.70px;top:496.58px;font-size:6.4px;line-height:12.8px;color:#3d3f42;transform:scaleX(0.927);transform-origin:0 50%;">30</span>
<svg class="a" style="left:727.2px;top:501.0px" width="3" height="2" viewBox="0 0 3 2"><path d="M0 0 L3 0 L1.5 1.8 Z" fill="#3d3f42"/></svg>
<span class="t" style="left:750.20px;top:496.58px;font-size:6.4px;line-height:12.8px;color:#707377;transform:scaleX(0.866);transform-origin:0 50%;">1-30 of 69338</span>
<svg class="a" style="left:794.5px;top:499.4px" width="3" height="6" viewBox="0 0 3 6"><path d="M2.4 0.6 L0.6 2.8 L2.4 5" fill="none" stroke="#d3d6da" stroke-width="0.7"/></svg>
<div class="a" style="left:804px;top:496.7px;width:12.2px;height:12px;background:#3d84f2;border-radius:1.2px"></div>
<svg class="a" style="left:804px;top:496.7px" width="12.2" height="12" viewBox="0 0 12.2 12"><path d="M6.1 3.5 L7.1 3.5 L7.1 8.5 L6.1 8.5 L6.1 4.8 L4.9 5.2 L4.9 4.4 Z" fill="#fff"/></svg>
<div class="a" style="left:851.0px;top:501.9px;width:3.6px;height:0.7px;background:#b0b3b7"></div>
<span class="t" style="left:822.32px;top:496.58px;font-size:6.4px;line-height:12.8px;color:#6d7074;">2</span>
<span class="t" style="left:836.72px;top:496.58px;font-size:6.4px;line-height:12.8px;color:#6d7074;">3</span>
<span class="t" style="left:862.08px;top:496.58px;font-size:6.4px;line-height:12.8px;color:#6d7074;transform:scaleX(0.960);transform-origin:50% 50%;">2310</span>
<span class="t" style="left:881.82px;top:496.58px;font-size:6.4px;line-height:12.8px;color:#6d7074;transform:scaleX(0.960);transform-origin:50% 50%;">2311</span>
<span class="t" style="left:901.48px;top:496.58px;font-size:6.4px;line-height:12.8px;color:#6d7074;transform:scaleX(0.960);transform-origin:50% 50%;">2312</span>
<svg class="a" style="left:924.2px;top:499.7px" width="3" height="5" viewBox="0 0 3 5"><path d="M0.5 0.4 L2.3 2.3 L0.5 4.2" fill="none" stroke="#6d7074" stroke-width="0.75"/></svg>
<div class="a" style="left:1px;top:517px;width:938px;height:2px;background:#fff"></div>
<div class="badge" style="left:9.9px;top:13.6px"><svg style="position:absolute;left:0;top:0" width="17" height="17" viewBox="0 0 17 17"><path d="M8.1 4.9 L9.7 4.9 L9.7 12.0 L8.1 12.0 L8.1 6.9 L6.1 7.6 L6.1 6.3 Z" fill="#fff"/></svg></div>
<div class="badge" style="left:66.6px;top:13.7px">2</div>
<div class="badge" style="left:71.3px;top:48.5px">3</div>
</div></body></html>
